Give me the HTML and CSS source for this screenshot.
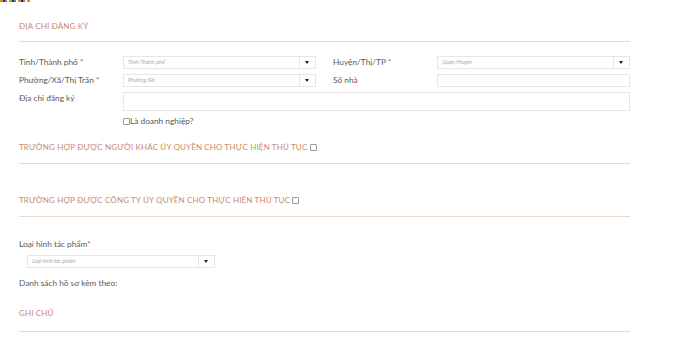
FILE: index.html
```html
<!doctype html>
<html lang="vi">
  <head>
    <meta charset="UTF-8" />
    <meta name="viewport" content="width=device-width, initial-scale=1.0" />
    <title>Địa chỉ đăng ký</title>
    <link rel="stylesheet" href="styles.css">
  </head>
  <body>
    <div class="loader-strip"></div>

    <div class="form">
      <div class="section-title">Địa chỉ đăng ký</div>

      <div class="address-grid">
        <label class="lbl">Tỉnh/Thành phố <span class="req">*</span></label>
        <div class="select">
          <span class="placeholder">Tỉnh/Thành phố</span>
          <span class="arrow"></span>
        </div>
        <label class="lbl lbl-right">Huyện/Thị/TP <span class="req">*</span></label>
        <div class="select">
          <span class="placeholder">Quận/Huyện</span>
          <span class="arrow"></span>
        </div>

        <label class="lbl">Phường/Xã/Thị Trấn <span class="req">*</span></label>
        <div class="select">
          <span class="placeholder">Phường/Xã</span>
          <span class="arrow"></span>
        </div>
        <label class="lbl lbl-right">Số nhà</label>
        <div class="input"></div>

        <label class="lbl">Địa chỉ đăng ký</label>
        <div class="textarea"></div>

        <div class="check-row">
          <span class="box"></span>Là doanh nghiệp?
        </div>
      </div>

      <div class="section-title sub">Trường hợp được người khác ủy quyền cho thực hiện thủ tục <span class="box"></span></div>

      <div class="section-title sub second">Trường hợp được công ty ủy quyền cho thực hiện thủ tục <span class="box"></span></div>

      <div class="work-type">
        <label class="lbl">Loại hình tác phẩm<span class="req">*</span></label>
        <div class="select wide">
          <span class="placeholder">Loại hình tác phẩm</span>
          <span class="arrow"></span>
        </div>
        <div class="lbl attach">Danh sách hồ sơ kèm theo:</div>
      </div>

      <div class="section-title note">Ghi chú</div>
    </div>
  </body>
</html>
```

FILE: styles.css
```css
body {
  margin: 0;
  background: #fff;
  font-family: Lato, "Open Sans", sans-serif;
  color: #555;
}
.loader-strip {
  width: 30px;
  height: 2px;
  background: repeating-linear-gradient(90deg, #e08a1e 0 3px, #333 3px 5px, #4a90d9 5px 7px, #fff 7px 9px);
}
.form {
  width: 611px;
  padding: 0 19px;
}
.section-title {
  font-size: 8px;
  text-transform: uppercase;
  color: #c98a6c;
  padding: 19px 0 10px;
  border-bottom: 1px solid #ecd9cc;
  letter-spacing: 0.15px;
}
.section-title.sub {
  margin-top: 5px;
  padding: 11px 0 11px;
}
.section-title.second {
  margin-top: 20px;
}
.section-title.note {
  margin-top: 15px;
  padding: 5px 0 13px;
}
.section-title .box {
  display: inline-block;
  width: 5px;
  height: 5px;
  border: 1px solid #999;
  border-radius: 1px;
  vertical-align: -1px;
}
.address-grid {
  display: grid;
  grid-template-columns: 104px 193px 121px 193px;
  row-gap: 5px;
  margin-top: 14px;
  align-items: center;
}
.address-grid .lbl-right {
  padding-left: 17px;
}
.address-grid .textarea {
  grid-column: 2 / 5;
  height: 17px;
  border: 1px solid #e6e6e6;
  align-self: start;
}
.address-grid .lbl {
  align-self: start;
  line-height: 13px;
}
.lbl {
  font-size: 8.3px;
  color: #5a5a5a;
}
.req {
  color: #d9534f;
}
.select {
  display: flex;
  height: 13px;
  box-sizing: border-box;
  border: 1px solid #e6e6e6;
}
.select.wide {
  width: 188px;
  margin: 6px 0 0 8px;
}
.placeholder {
  flex: 1;
  font-size: 5.5px;
  font-style: italic;
  color: #aaa;
  line-height: 11px;
  padding-left: 4px;
}
.arrow {
  width: 15px;
  border-left: 1px solid #e6e6e6;
  position: relative;
}
.arrow::after {
  content: "";
  position: absolute;
  left: 5px;
  top: 4px;
  border-left: 2.5px solid transparent;
  border-right: 2.5px solid transparent;
  border-top: 3px solid #222;
}
.input {
  height: 13px;
  box-sizing: border-box;
  border: 1px solid #e6e6e6;
}
.check-row {
  grid-column: 2 / 5;
  font-size: 8.3px;
  color: #5a5a5a;
  display: flex;
  align-items: center;
}
.check-row .box {
  width: 5px;
  height: 5px;
  border: 1px solid #999;
  border-radius: 1px;
}
.work-type {
  padding-top: 22px;
}
.work-type .lbl {
  display: block;
}
.attach {
  margin-top: 10px;
}
```
